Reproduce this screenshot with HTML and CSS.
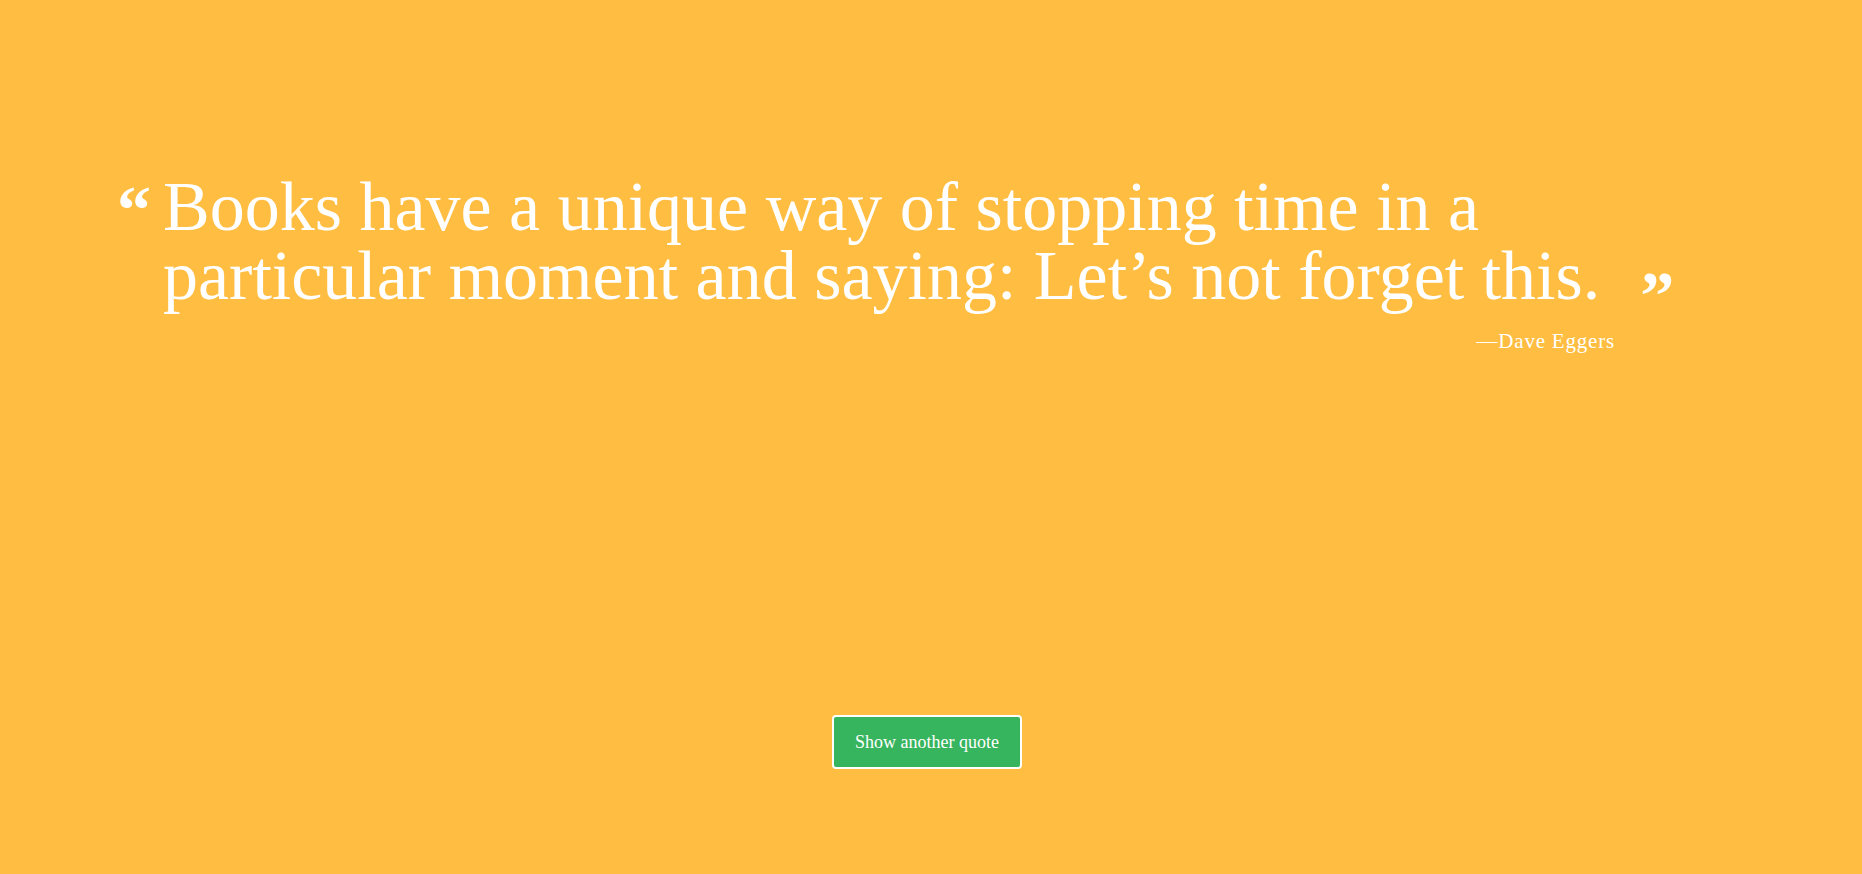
FILE: index.html
```html
<!DOCTYPE html>
<html lang="en">
<head>
<meta charset="utf-8">
<title>Random Quote</title>
<link rel="stylesheet" href="styles.css">
</head>
<body>
<main class="page">
  <figure class="quote">
    <blockquote class="quote-text"><span class="mark mark-open">“</span>Books have a unique way of stopping time in a particular moment and saying: Let’s not forget this.<span class="mark mark-close">”</span></blockquote>
    <figcaption class="author">—Dave Eggers</figcaption>
  </figure>
  <div class="actions">
    <button class="btn" type="button">Show another quote</button>
  </div>
</main>
</body>
</html>
```

FILE: styles.css
```css
html, body {
  margin: 0;
  padding: 0;
}
body {
  background: #ffbd41;
  color: #fff;
  font-family: "Liberation Serif", "Times New Roman", serif;
  min-height: 100vh;
}
.page {
  display: flex;
  flex-direction: column;
  min-height: 100vh;
}
.quote {
  margin: 0;
  padding: 172px 0 0 163px;
  width: 1540px;
}
.quote-text {
  margin: 0;
  font-size: 70px;
  line-height: 69px;
  text-indent: -46px;
}
.mark {
  display: inline-block;
  text-indent: 0;
  font-weight: bold;
  font-size: 68px;
  line-height: 0;
}
.mark-open {
  width: 46px;
  vertical-align: -3px;
}
.mark-close {
  margin-left: 40px;
  vertical-align: -19px;
}
.author {
  margin-top: 21px;
  font-size: 21px;
  line-height: 20px;
  letter-spacing: 0.8px;
  text-align: right;
  padding-right: 88px;
}
.actions {
  display: flex;
  justify-content: center;
  margin-top: 364px;
  padding-right: 8px;
}
.btn {
  width: 190px;
  height: 54px;
  background: #37b45e;
  color: #fff;
  border: 2px solid #fff;
  border-radius: 4px;
  font-family: "Liberation Serif", "Times New Roman", serif;
  font-size: 18px;
  cursor: pointer;
}
```
